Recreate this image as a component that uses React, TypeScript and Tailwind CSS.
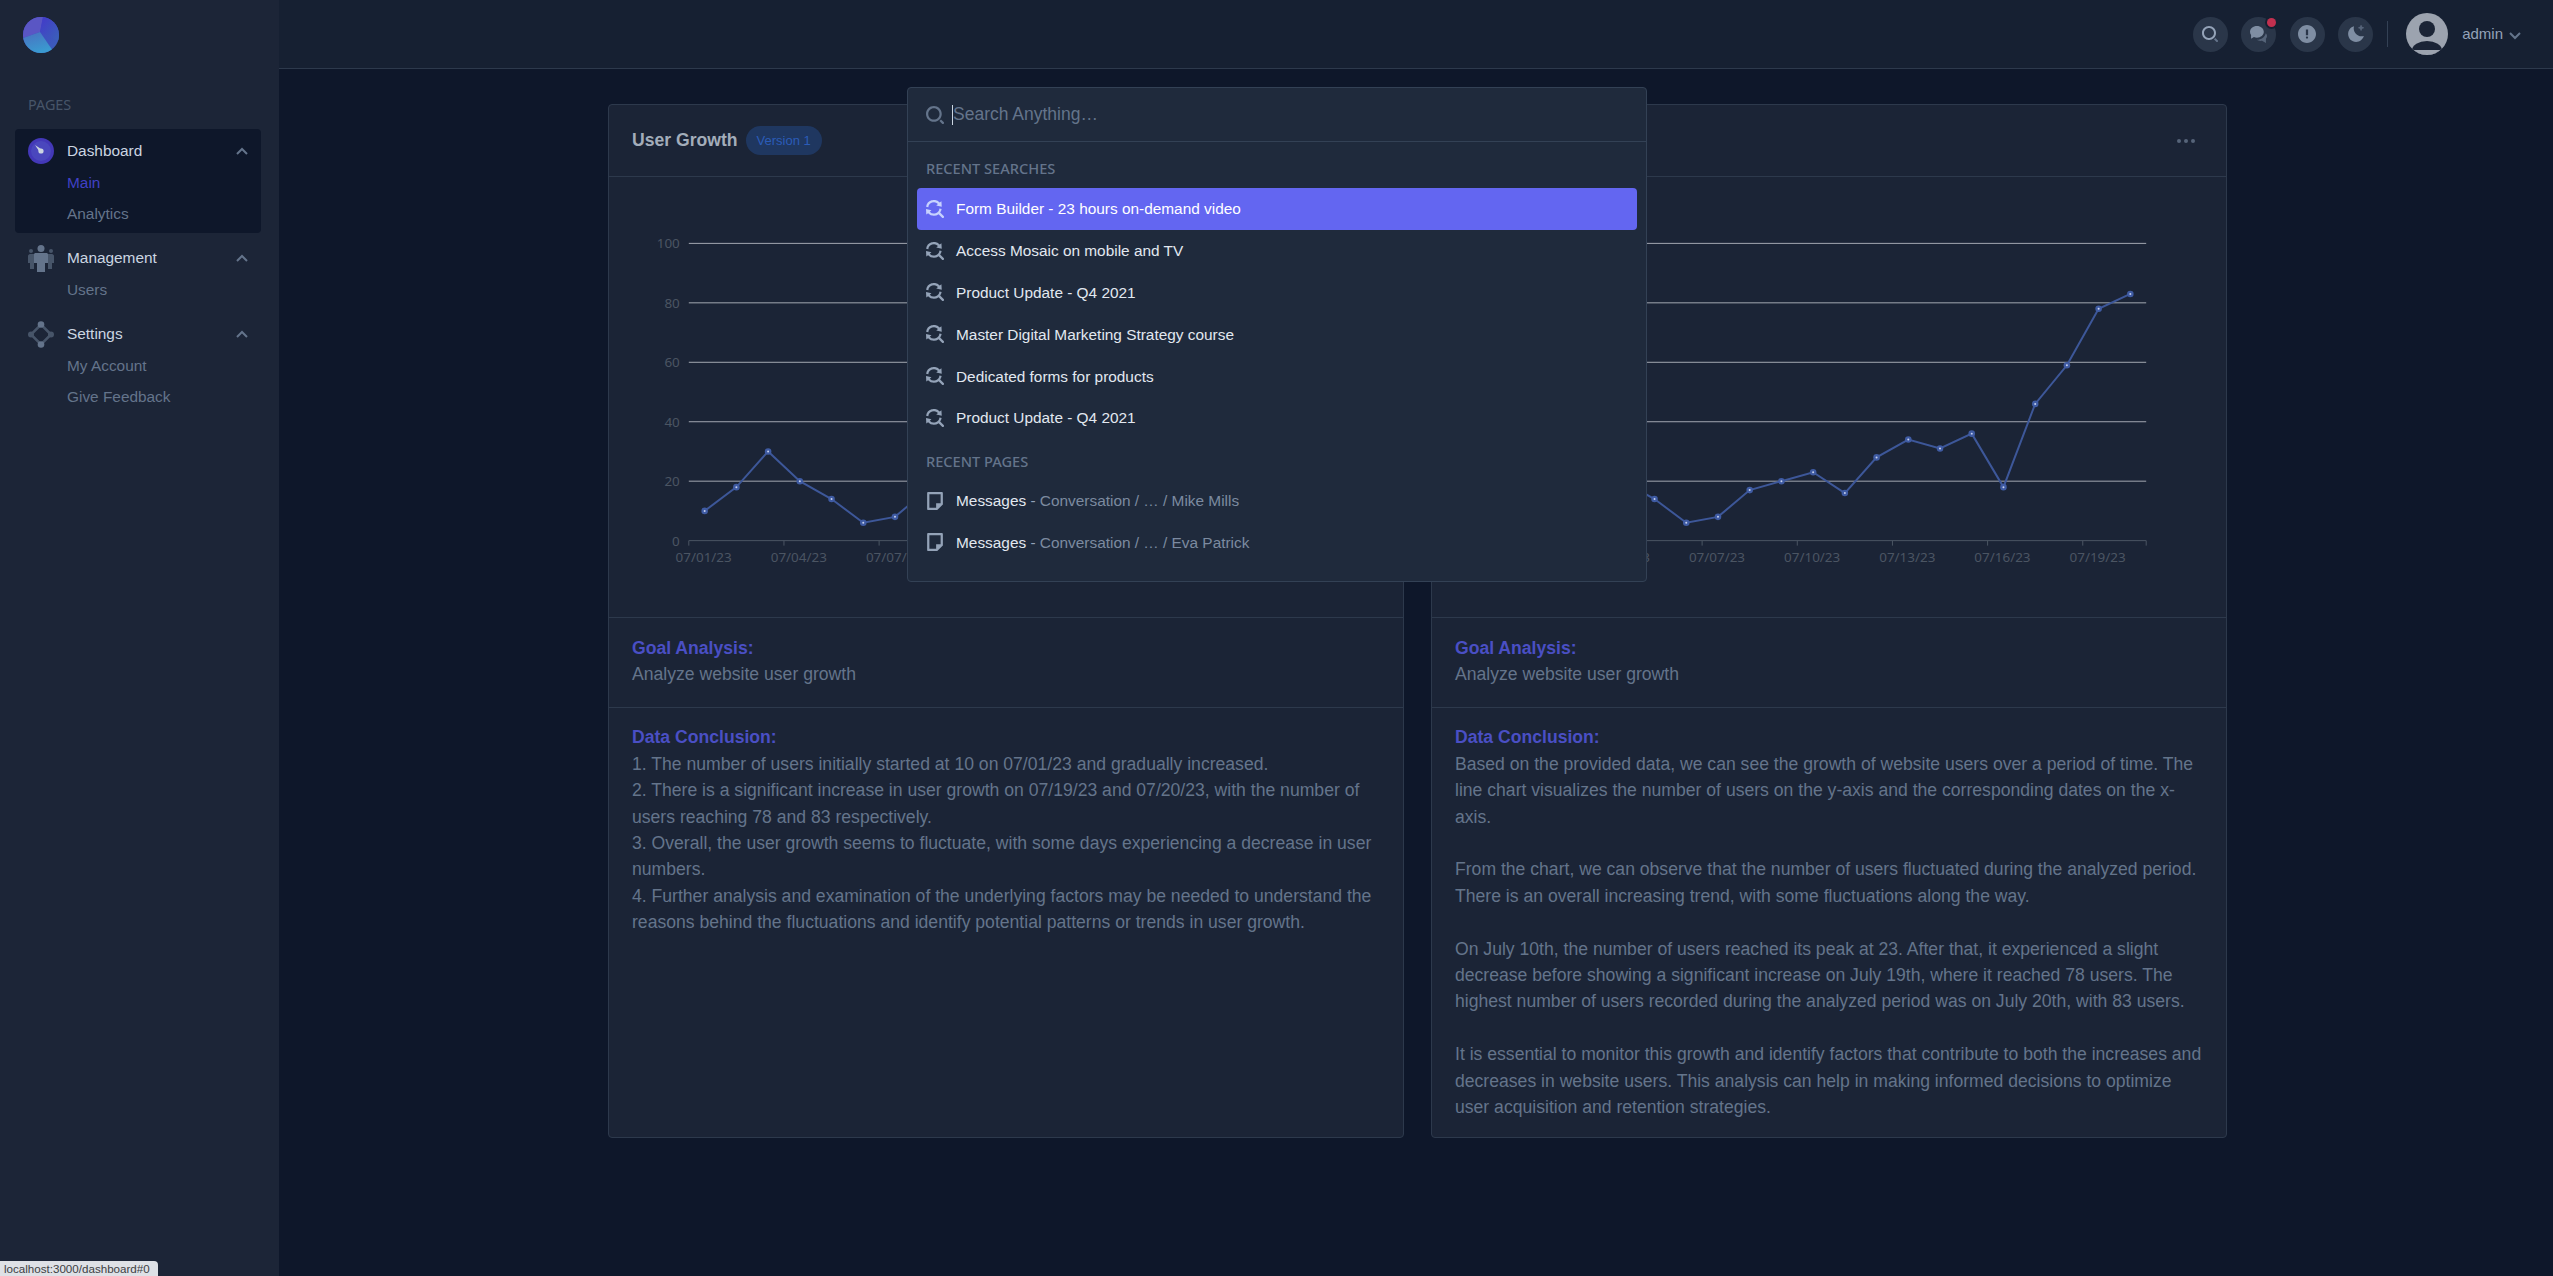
const sans = "font-['Liberation_Sans',Arial,sans-serif]";
const ui = "font-['Noto_Sans',sans-serif]";

const growth = [10, 18, 30, 20, 14, 6, 8, 17, 20, 23, 16, 28, 34, 31, 36, 18, 46, 59, 78, 83];
const tickDates = ['07/01/23', '07/04/23', '07/07/23', '07/10/23', '07/13/23', '07/16/23', '07/19/23'];

const recentSearches = [
  'Form Builder - 23 hours on-demand video',
  'Access Mosaic on mobile and TV',
  'Product Update - Q4 2021',
  'Master Digital Marketing Strategy course',
  'Dedicated forms for products',
  'Product Update - Q4 2021',
];

const conclusionA = [
  '1. The number of users initially started at 10 on 07/01/23 and gradually increased.',
  '2. There is a significant increase in user growth on 07/19/23 and 07/20/23, with the number of users reaching 78 and 83 respectively.',
  '3. Overall, the user growth seems to fluctuate, with some days experiencing a decrease in user numbers.',
  '4. Further analysis and examination of the underlying factors may be needed to understand the reasons behind the fluctuations and identify potential patterns or trends in user growth.',
];

const conclusionB = [
  'Based on the provided data, we can see the growth of website users over a period of time. The line chart visualizes the number of users on the y-axis and the corresponding dates on the x-axis.',
  'From the chart, we can observe that the number of users fluctuated during the analyzed period. There is an overall increasing trend, with some fluctuations along the way.',
  'On July 10th, the number of users reached its peak at 23. After that, it experienced a slight decrease before showing a significant increase on July 19th, where it reached 78 users. The highest number of users recorded during the analyzed period was on July 20th, with 83 users.',
  'It is essential to monitor this growth and identify factors that contribute to both the increases and decreases in website users. This analysis can help in making informed decisions to optimize user acquisition and retention strategies.',
];

function Chevron({ up = false, className = '' }: { up?: boolean; className?: string }) {
  return (
    <svg viewBox="0 0 12 8" className={`w-3 h-2 ${className}`} fill="none" stroke="currentColor" strokeWidth="2">
      <path d={up ? 'M1 7l5-5 5 5' : 'M1 1l5 5 5-5'} />
    </svg>
  );
}

function SearchIcon({ className = '' }: { className?: string }) {
  return (
    <svg viewBox="0 0 16 16" className={className}>
      <path fill="#94a3b8" d="M7 14c-3.86 0-7-3.14-7-7s3.14-7 7-7 7 3.14 7 7-3.14 7-7 7zM7 2C4.243 2 2 4.243 2 7s2.243 5 5 5 5-2.243 5-5-2.243-5-5-5z" />
      <path fill="#64748b" d="M15.707 14.293L13.314 11.9a8.019 8.019 0 01-1.414 1.414l2.393 2.393a.997.997 0 001.414 0 .999.999 0 000-1.414z" />
    </svg>
  );
}

function RecentIcon({ active }: { active: boolean }) {
  return (
    <svg viewBox="0 0 16 16" className="w-[18px] h-[18px] shrink-0" fill={active ? '#c7d2fe' : '#94a3b8'}>
      <path d="M15.707 14.293v.001a1 1 0 01-1.414 1.414L11.185 12.6A6.935 6.935 0 017 14a7.016 7.016 0 01-5.173-2.308l-1.537 1.3L0 8l4.873 1.12-1.521 1.285a4.971 4.971 0 008.59-2.835l1.979.454a6.971 6.971 0 01-1.321 3.157l3.107 3.112zM14 6L9.127 4.88l1.521-1.28a4.971 4.971 0 00-8.59 2.83L.084 5.976a6.977 6.977 0 0112.089-3.668l1.537-1.3L14 6z" />
    </svg>
  );
}

function PageIcon() {
  return (
    <svg viewBox="0 0 16 16" className="w-[18px] h-[18px] shrink-0" fill="#94a3b8">
      <path d="M14 0H2c-.6 0-1 .4-1 1v14c0 .6.4 1 1 1h8l5-5V1c0-.6-.4-1-1-1zM3 2h10v8H9v4H3V2z" />
    </svg>
  );
}

function Logo() {
  return (
    <svg viewBox="0 0 36 36" className="w-9 h-9">
      <defs>
        <clipPath id="logoClip">
          <circle cx="18" cy="18" r="18" />
        </clipPath>
        <linearGradient id="logoBottom" x1="0" y1="0" x2="0.4" y2="1">
          <stop offset="0" stopColor="#4a6fc0" />
          <stop offset="1" stopColor="#3a9ad0" />
        </linearGradient>
        <linearGradient id="logoRight" x1="0" y1="0" x2="1" y2="1">
          <stop offset="0" stopColor="#4338ca" />
          <stop offset="1" stopColor="#3a62b8" />
        </linearGradient>
      </defs>
      <g clipPath="url(#logoClip)">
        <rect width="36" height="36" fill="url(#logoRight)" />
        <path d="M0 0H20L17 15L0 21Z" fill="#5a56c4" />
        <path d="M20 0H36V24L17 15Z" fill="url(#logoRight)" />
        <path d="M0 21L17 15L30 34V36H0Z" fill="url(#logoBottom)" />
      </g>
    </svg>
  );
}

function DashboardIcon() {
  return (
    <svg viewBox="0 0 26 26" className="w-[26px] h-[26px] shrink-0">
      <circle cx="13" cy="13" r="13" fill="#4338b8" />
      <circle cx="13" cy="13" r="10" fill="#4a47bd" />
      <path d="M7 7l6 4-2 2z" fill="#cbd5e1" />
      <circle cx="13" cy="13" r="2.600" fill="#cbd5e1" />
    </svg>
  );
}

function UsersIcon() {
  return (
    <svg viewBox="0 0 26 27" className="w-[26px] h-[27px] shrink-0">
      <circle cx="3" cy="6" r="2" fill="#475569" />
      <circle cx="23" cy="6" r="2" fill="#475569" />
      <path d="M0 11c0-1 1-2 2-2h22c1 0 2 1 2 2v7h-2v6h-4V18H6v6H2v-6H0z" fill="#475569" />
      <circle cx="13" cy="3.500" r="3.500" fill="#64748b" />
      <path d="M6 9.500c0-.8.7-1.500 1.500-1.500h11c.8 0 1.500.7 1.500 1.500V18h-3v9H9v-9H6z" fill="#64748b" />
    </svg>
  );
}

function SettingsIcon() {
  return (
    <svg viewBox="0 0 26 27" className="w-[26px] h-[27px] shrink-0">
      <path d="M13 3.500L23 13.500L13 23.500L3 13.500Z" fill="none" stroke="#475569" strokeWidth="2.500" />
      <circle cx="13" cy="3.500" r="3.300" fill="#64748b" />
      <circle cx="13" cy="23.500" r="3.300" fill="#64748b" />
      <circle cx="3" cy="13.500" r="3" fill="#475569" />
      <circle cx="23" cy="13.500" r="3" fill="#475569" />
    </svg>
  );
}

function NavGroup({ icon, label, items, active }: { icon: React.ReactNode; label: string; items: string[]; active?: string }) {
  return (
    <div className="flex flex-col">
      <div className="flex items-center gap-[13px] h-[26px]">
        {icon}
        <span className="text-[15.400px] text-[#cbd5e1] grow">{label}</span>
        <Chevron up className="text-[#64748b]" />
      </div>
      <div className="flex flex-col mt-[3px]">
        {items.map((item) => (
          <a key={item} className={`h-[31px] flex items-center pl-[39px] text-[15.400px] ${item === active ? 'text-[#4040c4]' : 'text-[#64748b]'}`}>
            {item}
          </a>
        ))}
      </div>
    </div>
  );
}

function Sidebar() {
  return (
    <aside className="w-[279px] shrink-0 bg-[#1c2537] flex flex-col">
      <div className="ml-[23px] mt-[17px] h-9">
        <Logo />
      </div>
      <div className={`${ui} ml-[28px] mt-[42px] h-5 leading-5 text-[14.400px] text-[#475569]`}>PAGES</div>
      <div className="ml-[15px] mr-[18px] mt-[14px] bg-[#0e172a] rounded px-[13px] pt-[9px] pb-[4px]">
        <NavGroup icon={<DashboardIcon />} label="Dashboard" items={['Main', 'Analytics']} active="Main" />
      </div>
      <div className="ml-[15px] mr-[18px] mt-[12px] px-[13px] flex flex-col gap-[16px]">
        <NavGroup icon={<UsersIcon />} label="Management" items={['Users']} />
        <NavGroup icon={<SettingsIcon />} label="Settings" items={['My Account', 'Give Feedback']} />
      </div>
    </aside>
  );
}

function RoundButton({ children, badge }: { children: React.ReactNode; badge?: boolean }) {
  return (
    <button className="relative w-[35px] h-[35px] rounded-full bg-[#2a3649] flex items-center justify-center">
      {children}
      {badge && <span className="absolute top-[1px] right-0 w-[9px] h-[9px] rounded-full bg-[#c2304f] ring-2 ring-[#162032]" />}
    </button>
  );
}

function Header() {
  return (
    <header className="h-[69px] shrink-0 bg-[#162032] border-b border-[#2d394c] flex items-center justify-end pr-[32px]">
      <div className="flex items-center gap-[13.500px]">
        <RoundButton>
          <SearchIcon className="w-4 h-4" />
        </RoundButton>
        <RoundButton badge>
          <svg viewBox="0 0 16 16" className="w-[17px] h-[17px]">
            <path fill="#7f8ea3" d="M6.500 0C2.910 0 0 2.462 0 5.500c0 1.075.37 2.074 1 2.922V12l2.699-1.542A7.454 7.454 0 006.500 11c3.590 0 6.500-2.462 6.500-5.500S10.090 0 6.500 0z" />
            <path fill="#566479" d="M16 9.500c0-.987-.429-1.897-1.147-2.639C14.124 10.348 10.660 13 6.500 13c-.103 0-.202-.018-.305-.021C7.231 13.617 8.556 14 10 14c.449 0 .886-.04 1.307-.11L15 16v-4h-.012C15.627 11.285 16 10.425 16 9.500z" />
          </svg>
        </RoundButton>
        <RoundButton>
          <svg viewBox="0 0 16 16" className="w-[18px] h-[18px]">
            <path fill="#7f8ea3" d="M8 0C3.600 0 0 3.600 0 8s3.600 8 8 8 8-3.600 8-8-3.600-8-8-8zM7 4h2v5H7V4zm1 8.200c-.6 0-1-.4-1-1s.4-1 1-1 1 .4 1 1-.4 1-1 1z" />
          </svg>
        </RoundButton>
        <RoundButton>
          <svg viewBox="0 0 16 16" className="w-[18px] h-[18px]">
            <path fill="#7f8ea3" d="M6.200 1C3.200 1.800 1 4.600 1 7.900 1 11.800 4.200 15 8.100 15c3.300 0 6-2.200 6.900-5.200C9.700 11.200 4.800 6.300 6.200 1Z" />
            <path fill="#566479" d="M12.500 5a.625.625 0 0 1-.625-.625 1.252 1.252 0 0 0-1.250-1.250.625.625 0 1 1 0-1.250 1.252 1.252 0 0 0 1.250-1.250.625.625 0 1 1 1.250 0c.001.69.56 1.249 1.250 1.250a.625.625 0 1 1 0 1.250c-.69.001-1.249.56-1.250 1.250A.625.625 0 0 1 12.500 5Z" />
          </svg>
        </RoundButton>
      </div>
      <div className="w-px h-[26px] bg-[#334155] ml-[14px] mr-[18px]" />
      <svg viewBox="0 0 42 42" className="w-[42px] h-[42px]">
        <defs>
          <clipPath id="avatarClip">
            <circle cx="21" cy="21" r="21" />
          </clipPath>
        </defs>
        <circle cx="21" cy="21" r="21" fill="#9ca3af" />
        <g clipPath="url(#avatarClip)">
          <circle cx="21" cy="16" r="8" fill="#1b2436" />
          <ellipse cx="21" cy="37.500" rx="15" ry="9.500" fill="#1b2436" />
          <rect x="0" y="37" width="42" height="6" fill="#9ca3af" />
        </g>
      </svg>
      <span className="ml-[14px] text-[15px] text-[#94a3b8]">admin</span>
      <Chevron className="ml-[6px] mt-[3px] text-[#64748b]" />
    </header>
  );
}

function GrowthChart() {
  const left = 80;
  const step = 31.8;
  const base = 365;
  const unit = 2.98;
  return (
    <svg viewBox="0 0 796 441" className="w-full h-[441px] block">
      {[20, 40, 60, 80, 100].map((v) => (
        <line key={v} x1={left} x2={left + step * 20} y1={base - v * unit} y2={base - v * unit} stroke="#a3a8b2" strokeWidth="1" />
      ))}
      <line x1={left} x2={left + step * 20} y1={base} y2={base} stroke="#4b5563" strokeWidth="1" />
      {[0, 3, 6, 9, 12, 15, 18, 20].map((i) => (
        <line key={i} x1={left + step * i} x2={left + step * i} y1={base} y2={base + 5} stroke="#4b5563" strokeWidth="1" />
      ))}
      {[0, 20, 40, 60, 80, 100].map((v) => (
        <text key={v} x={left - 9} y={base - v * unit + 5} textAnchor="end" fontSize="13.500" fill="#4b5563" fontFamily="Noto Sans, sans-serif">
          {v}
        </text>
      ))}
      {tickDates.map((d, i) => (
        <text key={d} x={left - 1 + step * (i * 3 + 0.5)} y={base + 21} textAnchor="middle" fontSize="13.500" fill="#4b5563" fontFamily="Noto Sans, sans-serif">
          {d}
        </text>
      ))}
      <polyline
        fill="none"
        stroke="#3d5799"
        strokeWidth="2"
        points={growth.map((v, i) => `${left + step * (i + 0.5)},${base - v * unit}`).join(' ')}
      />
      {growth.map((v, i) => (
        <g key={i}>
          <circle cx={left + step * (i + 0.5)} cy={base - v * unit} r="3.300" fill="#3f5ba3" />
          <circle cx={left + step * (i + 0.5)} cy={base - v * unit} r="1" fill="#c5d0ee" />
        </g>
      ))}
    </svg>
  );
}

function ReportCard({ version, paragraphs, spaced }: { version: string; paragraphs: string[]; spaced?: boolean }) {
  return (
    <section className="bg-[#1b2436] border border-[#2d394c] rounded-sm flex flex-col">
      <div className="h-[72px] shrink-0 border-b border-[#2d394c] flex items-center px-[23px]">
        <h2 className="text-[17.600px] font-bold text-[#a3adba]">User Growth</h2>
        <span className="ml-[8px] h-[29px] px-[11px] rounded-full bg-[#1f3760] text-[13px] text-[#2b5cb8] flex items-center">{version}</span>
        <svg viewBox="0 0 18 4" className="ml-auto mr-[8px] w-[18px] h-1" fill="#566479">
          <circle cx="2" cy="2" r="2" />
          <circle cx="9" cy="2" r="2" />
          <circle cx="16" cy="2" r="2" />
        </svg>
      </div>
      <div className="-mt-px">
        <GrowthChart />
      </div>
      <div className="border-t border-[#2d394c] px-[23px] pt-[17px] pb-[19px] text-[17.600px] leading-[26.400px]">
        <div className="font-bold text-[#4a4fc4]">Goal Analysis:</div>
        <div className="text-[#64748b]">Analyze website user growth</div>
      </div>
      <div className="border-t border-[#2d394c] px-[23px] pt-[16.500px] pb-[17px] text-[17.600px] leading-[26.400px]">
        <div className="font-bold text-[#4a4fc4]">Data Conclusion:</div>
        <div className={`flex flex-col text-[#64748b] ${spaced ? 'gap-[26.400px]' : ''}`}>
          {paragraphs.map((p) => (
            <p key={p}>{p}</p>
          ))}
        </div>
      </div>
    </section>
  );
}

function SearchModal() {
  return (
    <div className="absolute left-[907px] top-[87px] w-[740px] bg-[#1f2a3c] border border-[#334155] rounded">
      <div className="relative h-[54px] border-b border-[#334155] flex items-center pl-[18px]">
        <svg viewBox="0 0 16 16" className="w-[18px] h-[18px] shrink-0" fill="#64748b">
          <path d="M7 14c-3.860 0-7-3.140-7-7s3.140-7 7-7 7 3.140 7 7-3.140 7-7 7zM7 2C4.243 2 2 4.243 2 7s2.243 5 5 5 5-2.243 5-5-2.243-5-5-5z" />
          <path d="M15.707 14.293L13.314 11.900a8.019 8.019 0 01-1.414 1.414l2.393 2.393a.997.997 0 001.414 0 .999.999 0 000-1.414z" />
        </svg>
        <span className="w-px h-5 bg-[#cbd5e1] ml-[8px]" />
        <input
          readOnly
          placeholder="Search Anything…"
          className="ml-0 grow bg-transparent outline-none text-[17.500px] placeholder:text-[#64748b]"
        />
      </div>
      <div className="px-[9px] pt-[16px] pb-[18px]">
        <div className={`${ui} h-5 leading-5 px-[9px] mb-[10px] text-[14.600px] font-medium text-[#64748b]`}>RECENT SEARCHES</div>
        {recentSearches.map((s, i) => (
          <div key={i} className={`h-[41.800px] flex items-center gap-3 px-[9px] rounded text-[15.400px] ${i === 0 ? 'bg-[#6366f1] text-white' : 'text-[#e2e8f0]'}`}>
            <RecentIcon active={i === 0} />
            <span>{s}</span>
          </div>
        ))}
        <div className={`${ui} h-5 leading-5 px-[9px] mt-[12px] mb-[9px] text-[14.600px] font-medium text-[#64748b]`}>RECENT PAGES</div>
        {['Mike Mills', 'Eva Patrick'].map((name) => (
          <div key={name} className="h-[41.800px] flex items-center gap-3 px-[9px] text-[15.400px]">
            <PageIcon />
            <span className="text-[#e2e8f0]">
              Messages <span className="text-[#94a3b8]">-</span> <span className="text-[#7c8aa0]">Conversation / … / {name}</span>
            </span>
          </div>
        ))}
      </div>
    </div>
  );
}

export default function App() {
  return (
    <div className={`${sans} relative flex h-[1276px] w-full overflow-hidden bg-[#0e172a]`}>
      <Sidebar />
      <div className="grow flex flex-col min-w-0">
        <Header />
        <main className="pt-[35px] flex justify-center">
          <div className="grid grid-cols-2 gap-[27px] w-[1619px] ml-[3px]">
            <ReportCard version="Version 1" paragraphs={conclusionA} />
            <ReportCard version="Version 2" paragraphs={conclusionB} spaced />
          </div>
        </main>
      </div>
      <SearchModal />
      <div className="absolute left-0 bottom-0 h-[15px] w-[158px] pl-[4px] bg-[#dee1e6] rounded-tr text-[11.600px] leading-[15px] text-[#3c4043] whitespace-nowrap">
        localhost:3000/dashboard#0
      </div>
    </div>
  );
}
